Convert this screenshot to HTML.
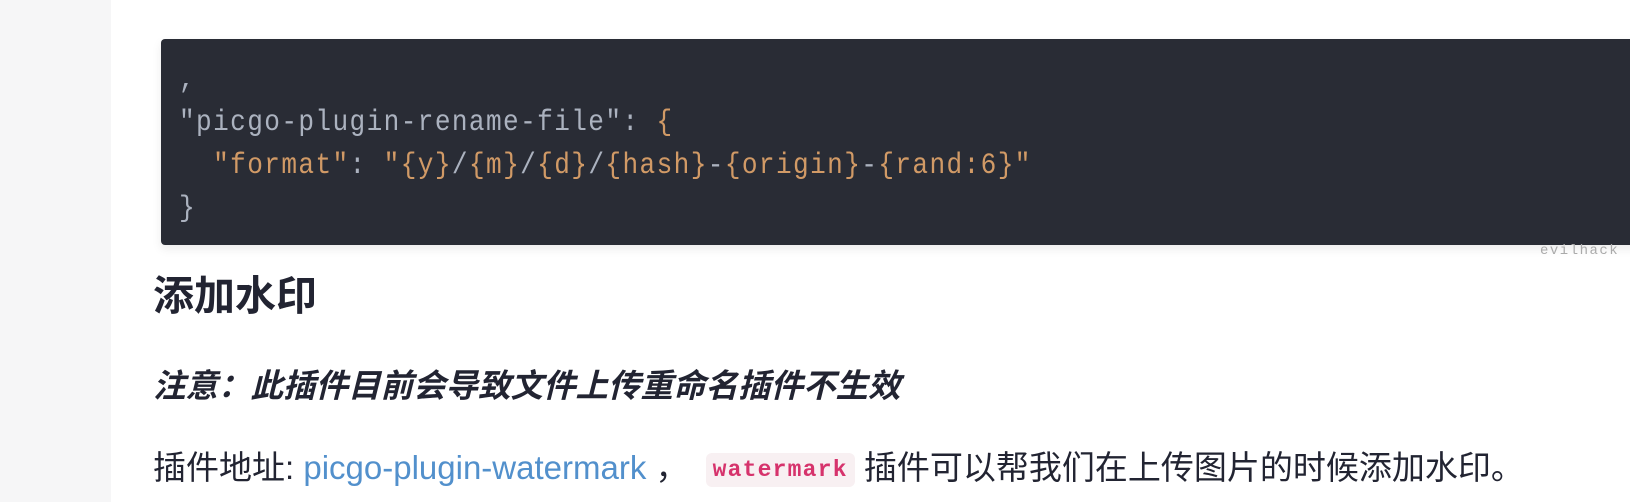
<!DOCTYPE html>
<html><head><meta charset="utf-8"><style>
html,body{margin:0;padding:0;width:1630px;height:502px;overflow:hidden;background:#fff;}
body{position:relative;font-family:"Liberation Sans","Noto Sans CJK SC",sans-serif;}
.side{position:absolute;left:0;top:0;width:111px;height:502px;background:#f6f6f7;}
.code{position:absolute;left:161px;top:39px;width:1500px;height:206px;background:#292c35;border-radius:4px;box-shadow:0 4px 10px rgba(0,0,0,0.08);}
.code pre{margin:0;position:absolute;left:18px;top:20px;font-family:"Liberation Mono",monospace;font-size:30px;letter-spacing:1.6px;line-height:43px;color:#abb2bf;transform:scaleX(0.87);transform-origin:0 0;}
.o{color:#d19a66;}
.wm{position:absolute;left:1540px;top:243px;font-family:"Liberation Mono",monospace;font-size:14px;color:#aaa;letter-spacing:1.5px;}
h2{position:absolute;left:153px;top:276px;margin:0;font-size:41px;line-height:41px;font-weight:bold;color:#222432;}
.note{position:absolute;left:153px;top:370px;font-size:32.5px;line-height:32px;font-weight:bold;font-style:italic;color:#222432;}
.p{position:absolute;left:153px;top:451px;font-size:33px;line-height:33px;color:#222432;white-space:nowrap;}
.p a{color:#5290cc;text-decoration:none;}
.p code{font-family:"Liberation Mono",monospace;font-size:23px;font-weight:bold;letter-spacing:1.2px;color:#d6336c;background:#f8f0f2;border-radius:6px;padding:4px 7px;margin-left:8px;position:relative;top:-3px;}
</style></head><body>
<div class="side"></div>
<div class="code"><pre>,
"picgo-plugin-rename-file": <span class="o">{</span>
  <span class="o">"format"</span>: <span class="o">"{y}</span>/<span class="o">{m}</span>/<span class="o">{d}</span>/<span class="o">{hash}</span>-<span class="o">{origin}</span>-<span class="o">{rand:6}"</span>
}</pre></div>
<div class="wm">evilhack</div>
<h2>添加水印</h2>
<div class="note">注意：此插件目前会导致文件上传重命名插件不生效</div>
<div class="p">插件地址: <a>picgo-plugin-watermark</a> ，&nbsp;<code>watermark</code> 插件可以帮我们在上传图片的时候添加水印。</div>
</body></html>
